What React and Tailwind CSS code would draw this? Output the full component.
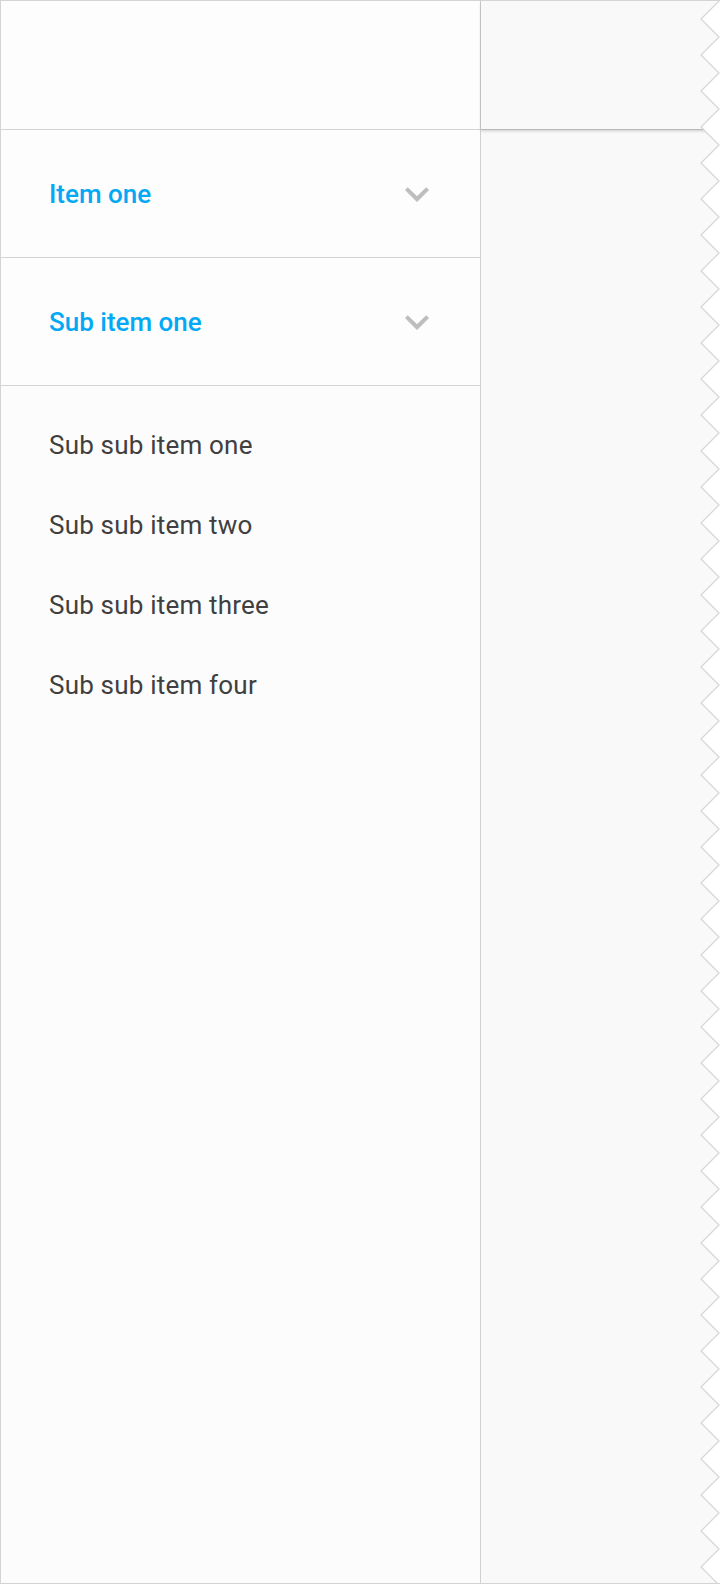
import React from "react";

// material "expand_more" chevron
function ExpandMore() {
  return (
    <svg width="48" height="48" viewBox="0 0 24 24" className="shrink-0">
      <path
        d="M16.59 8.59L12 13.17 7.41 8.59 6 10l6 6 6-6z"
        fill="#bdbdbd"
      />
    </svg>
  );
}

// torn edge on the right side of the screen
function TornEdge() {
  const height = 1584;
  const step = 36;
  let points = "18,0";
  for (let y = 0; y <= height; y += step) {
    points += ` 19,${y} 1,${y + 18}`;
  }
  const fill = `${points} 19,${height + step} 20,${height + step} 20,0`;
  return (
    <svg
      width="20"
      height={height}
      viewBox={`0 0 20 ${height}`}
      className="absolute right-0 top-0"
    >
      <polygon points={fill} fill="#ffffff" />
      <polyline points={points} fill="none" stroke="#d6d6d6" strokeWidth="1.2" />
    </svg>
  );
}

const subSubItems = [
  "Sub sub item one",
  "Sub sub item two",
  "Sub sub item three",
  "Sub sub item four",
];

export default function App() {
  return (
    <div
      className="relative flex w-[720px] h-[1584px] border-t border-l border-b border-[#d4d4d4] bg-white overflow-hidden"
      style={{ fontFamily: "Roboto, 'Noto Sans', sans-serif" }}
    >
      {/* Drawer */}
      <div className="flex flex-col w-[480px] border-r border-[#d0d0d0] bg-[#fdfdfd]">
        <div className="h-[129px] border-b border-[#d4d4d4]" />

        <div className="flex items-center justify-between h-[128px] border-b border-[#d4d4d4] pl-12 pr-[39px] pt-px">
          <span className="text-[26px] font-medium text-[#03a9f4]">Item one</span>
          <ExpandMore />
        </div>

        <div className="flex items-center justify-between h-[128px] border-b border-[#d4d4d4] pl-12 pr-[39px] pt-px">
          <span className="text-[26px] font-medium text-[#03a9f4]">Sub item one</span>
          <ExpandMore />
        </div>

        <div className="flex flex-col pt-[19px] bg-[#fcfcfc] flex-1">
          {subSubItems.map((label) => (
            <div key={label} className="flex items-center h-20 pl-12">
              <span className="text-[26px] tracking-[0.2px] text-[#404040]">{label}</span>
            </div>
          ))}
        </div>
      </div>

      {/* Content */}
      <div className="relative flex-1 bg-[#f9f9f9]">
        <div className="h-[129px] border-b border-[#b8b8b8] shadow-[0_1px_3px_rgba(0,0,0,0.18)]" />
        <TornEdge />
      </div>
    </div>
  );
}
